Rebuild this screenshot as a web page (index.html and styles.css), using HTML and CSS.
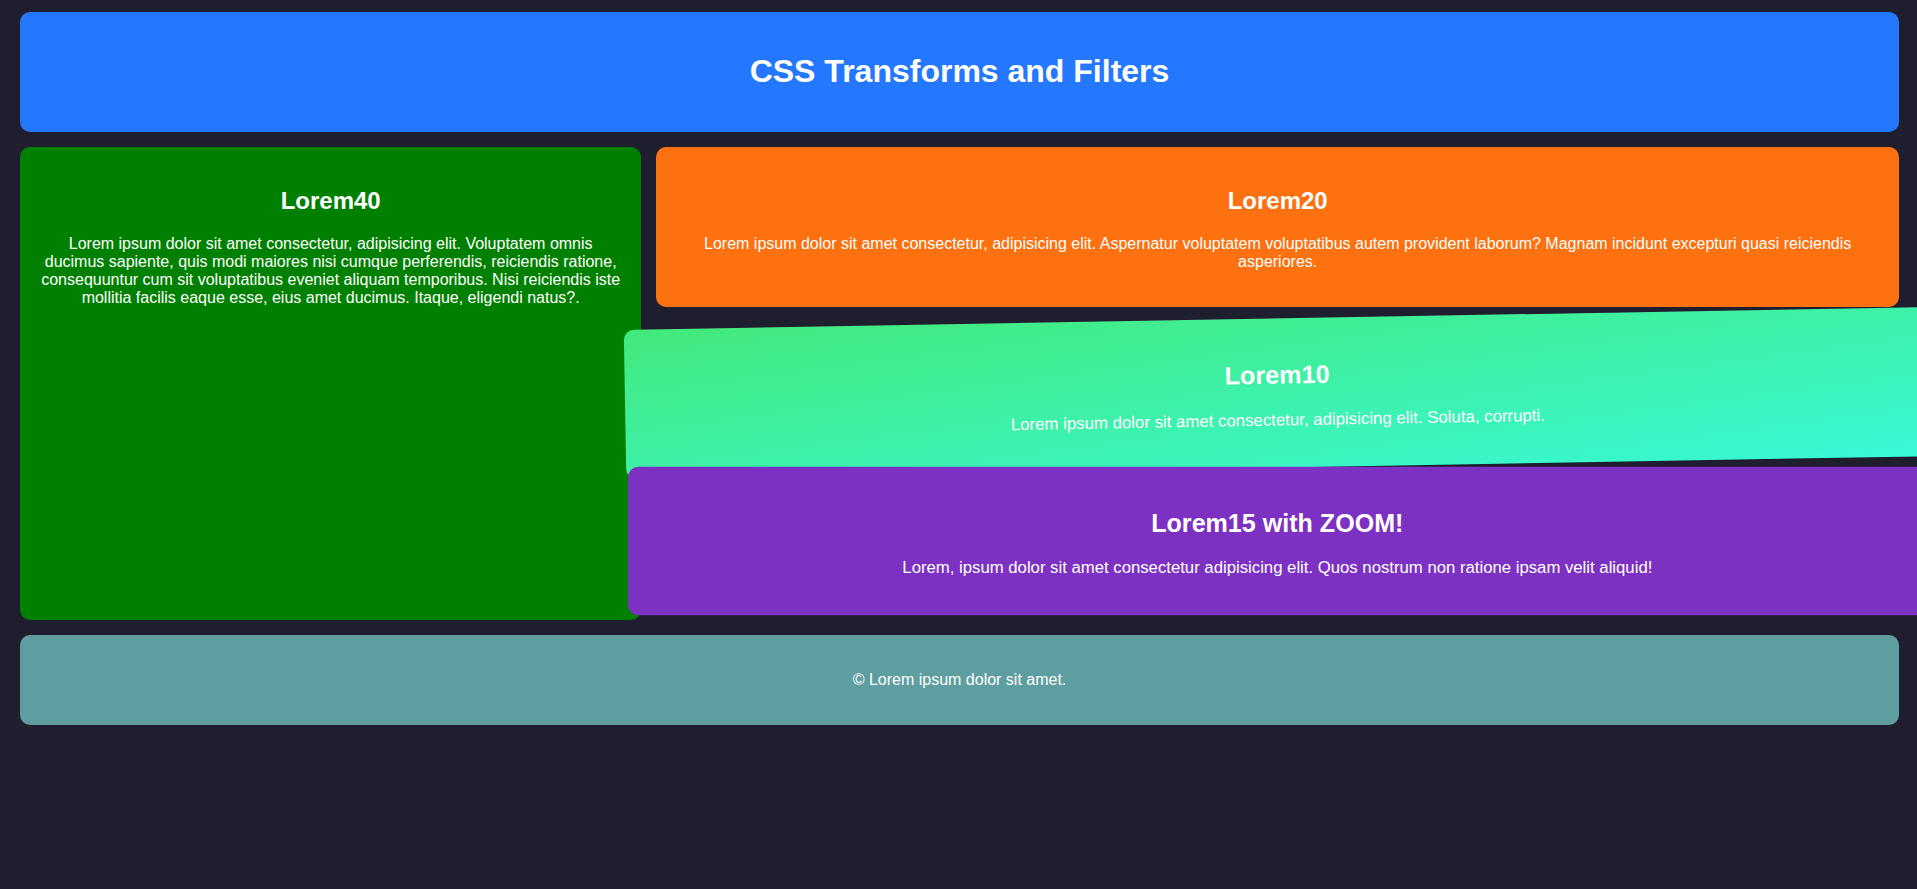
FILE: index.html
```html
<!DOCTYPE html>
<html lang="en">
<head>
<meta charset="utf-8">
<title>CSS Transforms and Filters</title>
<link rel="stylesheet" href="styles.css">
</head>
<body>
<div class="page">
  <header class="hero">
    <h1>CSS Transforms and Filters</h1>
  </header>
  <main class="grid">
    <section class="card card-green">
      <h2>Lorem40</h2>
      <p>Lorem ipsum dolor sit amet consectetur, adipisicing elit. Voluptatem omnis ducimus sapiente, quis modi maiores nisi cumque perferendis, reiciendis ratione, consequuntur cum sit voluptatibus eveniet aliquam temporibus. Nisi reiciendis iste mollitia facilis eaque esse, eius amet ducimus. Itaque, eligendi natus?.</p>
    </section>
    <section class="card card-orange">
      <h2>Lorem20</h2>
      <p>Lorem ipsum dolor sit amet consectetur, adipisicing elit. Aspernatur voluptatem voluptatibus autem provident laborum? Magnam incidunt excepturi quasi reiciendis asperiores.</p>
    </section>
    <section class="card card-gradient">
      <h2>Lorem10</h2>
      <p>Lorem ipsum dolor sit amet consectetur, adipisicing elit. Soluta, corrupti.</p>
    </section>
    <section class="card card-purple">
      <h2>Lorem15 with ZOOM!</h2>
      <p>Lorem, ipsum dolor sit amet consectetur adipisicing elit. Quos nostrum non ratione ipsam velit aliquid!</p>
    </section>
  </main>
  <footer class="foot">
    <p>&copy; Lorem ipsum dolor sit amet.</p>
  </footer>
</div>
</body>
</html>
```

FILE: styles.css
```css
html, body {
  overflow-x: hidden;
}

body {
  margin: 0;
  background: #1f1e2e;
  color: #ffffff;
  font-family: "Liberation Sans", Arial, sans-serif;
  font-size: 16px;
  text-align: center;
}

.page {
  display: flex;
  flex-direction: column;
  gap: 15px;
  margin: 12px 18px 0 20px;
}

.hero {
  background: #2477ff;
  border-radius: 10px;
  padding: 20px;
}

.hero h1 {
  font-size: 32px;
  margin: 21.44px 0;
}

.grid {
  display: grid;
  grid-template-columns: 1fr 2fr;
  gap: 15px;
}

.card {
  border-radius: 10px;
  padding: 20px;
}

.card h2 {
  font-size: 24px;
  margin: 19.92px 0;
}

.card p {
  margin: 16px 0;
}

.card-green {
  background: #008000;
  grid-row: 1 / span 3;
}

.card-orange {
  background: #fd7110;
}

.card-gradient {
  background: linear-gradient(to bottom right, #43e97b, #38f9d7);
  transform: rotate(-1deg) scale(1.05);
}

.card-purple {
  background: #7d31c2;
  transform: translateY(-9px) scale(1.045);
}

.foot {
  background: #5f9ea0;
  border-radius: 10px;
  padding: 20px;
}

.foot p {
  margin: 16px 0;
}
```
